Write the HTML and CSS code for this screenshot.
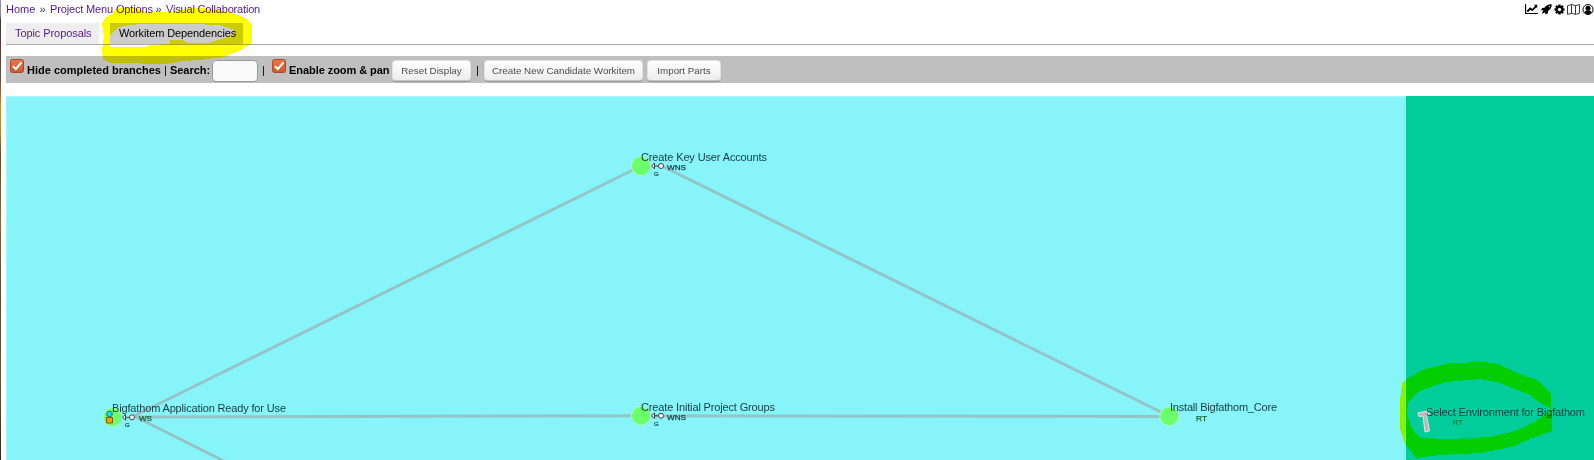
FILE: index.html
```html
<!DOCTYPE html>
<html lang="en">
<head>
<meta charset="utf-8">
<title>Visual Collaboration</title>
<link rel="stylesheet" href="styles.css">
</head>
<body>
<div class="page">
  <header class="top">
    <nav class="crumbs"><a class="c1">Home</a><span class="sep">»</span><a class="c2">Project Menu Options</a><span class="sep">»</span><a class="c3">Visual Collaboration</a></nav>
    <div class="icons">
      <svg width="14" height="12" viewBox="0 0 14 12"><path d="M.6 0v9.500H13" fill="none" stroke="#000" stroke-width="1.100"/><path d="M2.300 7.500 5.300 4.500l2 1.600L11 2.300" fill="none" stroke="#000" stroke-width="1.800"/><path d="M8.800.8h3.400v3.500z"/></svg>
      <svg width="11" height="12" viewBox="0 0 11 12"><path d="M10.700.3C7 .2 5 1.500 3.500 3.700L1.200 3.900 0 6.500l2.300-.2L.8 9.700 4 8.500l.5 2L7 9.200l.2-2.500C9.500 5.500 10.800 3.500 10.700.3z"/><circle cx="8.300" cy="2.700" r=".6" fill="#fff"/></svg>
      <svg width="11" height="12" viewBox="-5.500 -5.500 11 12"><path d="M-1.200-5h2.400V5h-2.400z"/><path d="M-1.200-5h2.400V5h-2.400z" transform="rotate(45)"/><path d="M-1.200-5h2.400V5h-2.400z" transform="rotate(90)"/><path d="M-1.200-5h2.400V5h-2.400z" transform="rotate(135)"/><circle r="3.800"/><circle r="1.700" fill="#fff"/></svg>
      <svg width="13" height="12" viewBox="0 0 13 12"><path d="M.5 1.700 4.500.5l4 1.200L12.500.5v8.700L8.500 10.400l-4-1.200-4 1.200zM4.500.5v8.700M8.500 1.700v8.700" fill="none" stroke="#222" stroke-width=".9"/></svg>
      <svg width="12" height="12" viewBox="0 0 12 12"><circle cx="6" cy="5.500" r="5" fill="#fff" stroke="#000"/><circle cx="6" cy="4.200" r="2.500"/><path d="M2.300 8.500C2.600 7 4 6.500 6 6.500s3.400.5 3.700 2C8 10.800 4 10.800 2.300 8.500z"/></svg>
    </div>
  </header>
  <nav class="tabs"><a class="tab t1"><span>Topic Proposals</span></a><a class="tab t2 active"><span>Workitem Dependencies</span></a></nav>
  <div class="toolbar">
    <svg class="check" width="14" height="14" viewBox="0 0 14 14"><use href="#box"/></svg>
    <b class="l1">Hide completed branches</b><span class="p1">|</span><b class="l2">Search:</b><input class="search" type="text"><span class="p2">|</span>
    <svg class="check" width="14" height="14" viewBox="0 0 14 14"><defs><linearGradient id="or" x2="0" y2="1"><stop stop-color="#e5794e"/><stop offset="1" stop-color="#d75426"/></linearGradient><g id="box"><rect x=".5" y=".5" width="13" height="13" rx="2" fill="url(#or)" stroke="#a8492a"/><path d="M3 7.200 5.800 10 11.500 3.500" fill="none" stroke="#fff" stroke-width="2"/></g></defs><use href="#box"/></svg>
    <b class="l3">Enable zoom &amp; pan</b><button class="b1">Reset Display</button><span class="p3">|</span><button class="b2">Create New Candidate Workitem</button><button class="b3">Import Parts</button>
  </div>
  <svg class="graph" width="1588" height="364" viewBox="6 96 1588 364">
    <defs><g id="conn"><path d="M10.500 0 13.500-2.800v5.600zM13.500 0h4.500" fill="#dff" stroke="#333" stroke-width=".9"/><circle cx="20" cy="0" r="2.500" fill="#fff" stroke="#444"/></g></defs>
    <path fill="#aaf8fa" d="M6 96h1400v364H6z"/>
    <path fill="#86f4f8" d="M7 97h1399v363H7z"/>
    <path fill="#04cd9c" d="M1406 96h188v364h-188z"/>
    <path stroke="#b7faed" d="M1405.500 96v364"/>
    <g stroke="#93c5c8" stroke-width="3" fill="none"><path d="M134 416 641 166M662 166 1169 416M134 417 641 415.800 1169 416.500M134 416 L224 461"/></g>
    <g fill="#6bff6b" stroke="#b5f7d0"><circle cx="112.500" cy="417.300" r="9.500"/><circle cx="641" cy="166" r="9.500"/><circle cx="641" cy="415.800" r="9.500"/><circle cx="1169.300" cy="416.300" r="9.500"/></g>
    <circle cx="109.500" cy="414" r="2.800" fill="#00e5ff" stroke="#356a50"/><path d="M106.500 417.500h6v5.500h-6z" fill="#ff9d00" stroke="#7a6020"/>
    <use href="#conn" x="112" y="417.300"/><use href="#conn" x="641" y="166"/><use href="#conn" x="641" y="415.800"/>
    <g class="tiny"><text x="125" y="427">G</text><text x="654" y="176">G</text><text x="654" y="426">G</text></g>
    <path d="M1418 413 1428 411 1430 413.500 1426.500 415.500 1429.500 431 1425 432 1423 416 1419 416.500z" fill="#b8b8b8" stroke="#e5e5e5"/>
    <g class="name">
      <text x="112" y="412" textLength="174">Bigfathom Application Ready for Use</text>
      <text x="641" y="161" textLength="126">Create Key User Accounts</text>
      <text x="641" y="411" textLength="134">Create Initial Project Groups</text>
      <text x="1170" y="411" textLength="107">Install Bigfathom_Core</text>
      <text x="1426" y="416" textLength="159">Select Environment for Bigfathom</text>
    </g>
    <g class="status">
      <text x="139" y="420.500" textLength="13" lengthAdjust="spacingAndGlyphs" class="green">WS</text><text x="667" y="170" textLength="19" lengthAdjust="spacingAndGlyphs">WNS</text><text x="667" y="420" textLength="19" lengthAdjust="spacingAndGlyphs">WNS</text><text x="1196" y="421" textLength="11" lengthAdjust="spacingAndGlyphs" class="green">RT</text><text x="1452.500" y="425" textLength="10.500" lengthAdjust="spacingAndGlyphs" class="olive">RT</text>
    </g>
  </svg>
</div>
<svg class="marker" width="1594" height="460" viewBox="0 0 1594 460" fill="#ff0" fill-rule="evenodd" shape-rendering="crispEdges">
  <path d="M105 18 112 14 117 8 135 8 148 12 170 12 190 8 205 8 230 12 245 18 252 24 252 43 240 50 225 57 200 60 182 61 168 64 112 63 103 60 102 50 104 37 102 24zM116 29 123 26 140 24 190 24 220 25 234 30 235 33 225 38 208 43 188 43 182 40 170 40 170 44 150 45 145 47 110 47 110 35z"/>
  <path d="M1406 379 1425 369 1450 363 1485 362 1498 364 1515 372 1537 380 1551 393 1552 431 1530 439 1515 446 1480 453 1440 455 1416 458 1405 444 1400 428 1400 400 1402 384zM1408 402 1420 391 1445 382 1480 379 1500 383 1530 395 1540 403 1550 408 1550 411 1535 422 1515 431 1490 437 1450 439 1420 438 1411 427 1407 412z"/>
</svg>
</body>
</html>
```
FILE: styles.css
```css
body{margin:0;width:1594px;height:460px;overflow:hidden;background:#fff;font:11px/14px "Liberation Sans",sans-serif;color:#000}
.page{box-sizing:border-box;height:460px;padding-left:6px;background:linear-gradient(#8e8a9a 0,#8e8a9a 16px,#443634 20px,#6b5040 80px,#c08c3a 105px,#b58a40 130px,#6b4b28 155px,#87663a 220px,#5a4733 300px,#6e5535 380px,#2a2420 460px) 0 0/1px 100% no-repeat;display:flex;flex-direction:column}
.top{display:flex;justify-content:space-between;height:23px}
.crumbs{display:flex;padding-top:2px;color:#551a8b;white-space:nowrap}
.c1{width:29px}
.sep{width:15px;text-align:center;color:#333}
.c2{width:101px;letter-spacing:-.15px}
.c3{width:96px;letter-spacing:-.18px}
.icons{display:flex;gap:2px;padding:4px 0 0 0}
.tabs{display:flex;gap:11px;height:21px;border-bottom:1px solid #aaa}
.tab{background:#eee;color:#551a8b;box-sizing:border-box;padding:3px 0 0 9px;white-space:nowrap}
.t1{width:93px;letter-spacing:-.08px}
.t2{width:133px;letter-spacing:-.12px}
.active{background:#ccc;color:#000}
.toolbar{display:flex;align-items:center;height:27px;margin:11px 0 13px;background:#bfbfbf;padding-left:4px;white-space:nowrap}
.toolbar b,.toolbar span{flex:none;padding-top:1px}
.toolbar button{flex:none;margin-top:1px}
.check{flex:none;margin-bottom:8px;margin-right:3px}
.l1{width:134px}
.p1{width:3px;margin:0 3px}
.l2{width:42px;letter-spacing:-.05px}
.search{box-sizing:border-box;width:46px;height:22px;border:1px solid #999;border-radius:4px;background:#fafafa;padding:0;margin:2px 0 0}
.p2{width:3px;margin:0 7px 0 4px}
.l3{width:103px;letter-spacing:-.06px}
.toolbar button{height:21px;padding:0;border:1px solid #e2e2e2;border-bottom-color:#c5c5c5;border-radius:4px;background:linear-gradient(#fff,#ededed);font:9.800px "Liberation Sans",sans-serif;color:#4c4c4c;box-shadow:0 1px 1px #999}
.b1{width:79px}
.p3{width:3px;margin:0 5px}
.toolbar .b2{width:159px;margin-right:4px}
.b3{width:74px}
.graph{display:block;flex:none}
.name{font-size:11px;fill:#173b40}
.status{font-size:8px;fill:#173b40;stroke:#173b40;stroke-width:.25}
.green{fill:#14602a;stroke:#14602a}
.olive{fill:#30601a;stroke:none}
.tiny{font-size:6px;fill:#173b40;stroke:#173b40;stroke-width:.2}
.marker{position:absolute;left:0;top:0;mix-blend-mode:multiply;pointer-events:none}
```
